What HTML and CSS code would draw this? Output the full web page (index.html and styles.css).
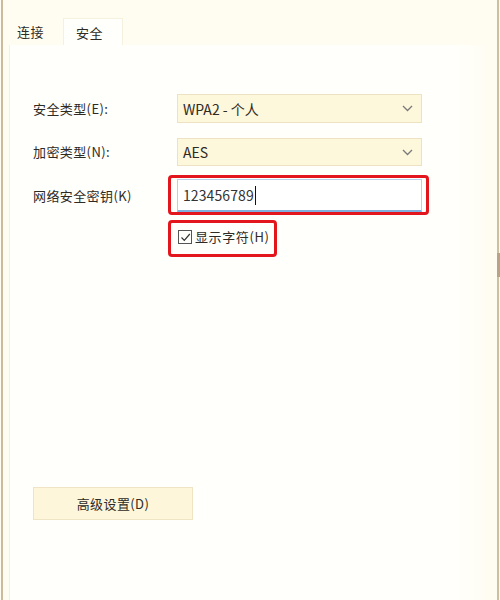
FILE: index.html
```html
<!DOCTYPE html>
<html lang="zh-CN">
<head>
<meta charset="utf-8">
<title>无线网络属性 - 安全</title>
<link rel="stylesheet" href="styles.css">
</head>
<body>
<div class="frame">
  <div class="tabs">
    <div class="tab">连接</div>
    <div class="tab tab-active">安全</div>
  </div>
  <div class="panel">
    <div class="form">
      <div class="label">安全类型(E):</div>
      <div class="select">
        <span>WPA2 - 个人</span>
        <svg class="chev" width="11" height="7" viewBox="0 0 11 7"><path d="M1 1 L5.5 5.5 L10 1" fill="none" stroke="#7a7a7a" stroke-width="1.3"/></svg>
      </div>

      <div class="label">加密类型(N):</div>
      <div class="select select-2">
        <span>AES</span>
        <svg class="chev" width="11" height="7" viewBox="0 0 11 7"><path d="M1 1 L5.5 5.5 L10 1" fill="none" stroke="#7a7a7a" stroke-width="1.3"/></svg>
      </div>

      <div class="label label-key">网络安全密钥(K)</div>
      <div class="hl hl-input">
        <div class="input"><span>123456789</span><span class="caret"></span></div>
      </div>

      <div></div>
      <div class="check-row">
        <label class="hl hl-check">
          <span class="box"><svg width="11" height="11" viewBox="0 0 11 11"><path d="M1.5 5.5 L4.3 8.3 L9.8 2" fill="none" stroke="#333" stroke-width="1.2"/></svg></span>
          <span class="check-text">显示字符(H)</span>
        </label>
      </div>
    </div>
    <div class="btn">高级设置(D)</div>
  </div>
</div>
</body>
</html>
```

FILE: styles.css
```css
* { box-sizing: border-box; }
html, body {
  margin: 0;
  padding: 0;
}
body {
  width: 500px;
  height: 600px;
  background: #fffdf1;
  font-family: "Noto Sans CJK SC", "Noto Sans", sans-serif;
  color: #2e2a24;
  overflow: hidden;
}
.frame {
  position: relative;
  margin-left: 1px;
  width: 498px;
  height: 600px;
  border-left: 2px solid #cbbb9c;
  border-right: 2px solid #cdbfa2;
  background: #fffdf1;
  display: flex;
  flex-direction: column;
}
.frame::after {
  content: "";
  position: absolute;
  right: -3px;
  top: 253px;
  width: 3px;
  height: 24px;
  background: #b8a587;
}
.tabs {
  display: flex;
  padding: 18px 0 0 6px;
  height: 45px;
}
.tab {
  height: 27px;
  font-size: 13px;
  line-height: 27px;
  padding-left: 8px;
  width: 54px;
  letter-spacing: 0.5px;
}
.tab-active {
  width: 60px;
  padding-left: 12px;
  background: #fffffb;
  border: 1px solid #f6f1df;
  border-bottom: none;
}
.panel {
  flex: 1;
  margin-left: 6px;
  width: 477px;
  background: linear-gradient(to right, #fffffb 0%, #fffffb 94%, #fffdf3 100%);
  border-left: 1px solid #f6f1df;
  padding: 49px 0 0 23px;
}
.form {
  display: grid;
  grid-template-columns: 144px 245px;
  align-items: center;
}
.label {
  font-size: 13px;
  line-height: 18px;
  letter-spacing: 0.4px;
}
.label-key { margin-top: 13px; align-self: center; }
.select {
  height: 29px;
  background: #fdf7dc;
  border: 1px solid #ede3c3;
  display: flex;
  align-items: center;
  justify-content: space-between;
  padding: 0 8px 0 5px;
  font-size: 14px;
}
.select-2 {
  height: 28px;
  margin-top: 15px;
}
.form > .label:nth-child(3) { margin-top: 15px; }
.chev { display: block; }
.hl { position: relative; }
.hl::after {
  content: "";
  position: absolute;
  border: 3px solid #e3161d;
  border-radius: 4px;
  pointer-events: none;
}
.hl-input { margin-top: 13px; }
.hl-input::after {
  top: -4px;
  bottom: -3px;
  left: -9px;
  right: -7px;
}
.input {
  height: 33px;
  background: #ffffff;
  border: 1px solid #b9d1e8;
  border-bottom: 2px solid #7fb0dd;
  display: flex;
  align-items: center;
  padding-left: 5px;
  font-size: 14px;
  color: #333;
  letter-spacing: 0.1px;
}
.caret {
  display: inline-block;
  width: 1px;
  height: 19px;
  background: #111;
  margin-left: 1px;
}
.check-row {
  margin-top: 15px;
  height: 20px;
  display: flex;
}
.hl-check {
  display: flex;
  align-items: center;
  height: 20px;
  padding-left: 1px;
}
.hl-check::after {
  top: -7px;
  bottom: -10px;
  left: -9px;
  right: -8px;
}
.box {
  width: 14px;
  height: 14px;
  border: 1px solid #555;
  background: #fffffb;
  display: flex;
  align-items: center;
  justify-content: center;
  margin-right: 3px;
}
.box svg { display: block; }
.check-text {
  font-size: 13px;
  line-height: 20px;
  letter-spacing: 0.6px;
}
.btn {
  margin-top: 240px;
  width: 160px;
  height: 33px;
  background: #fdf6da;
  border: 1px solid #efe5c5;
  font-size: 13px;
  letter-spacing: 0.4px;
  display: flex;
  align-items: center;
  justify-content: center;
}
```
